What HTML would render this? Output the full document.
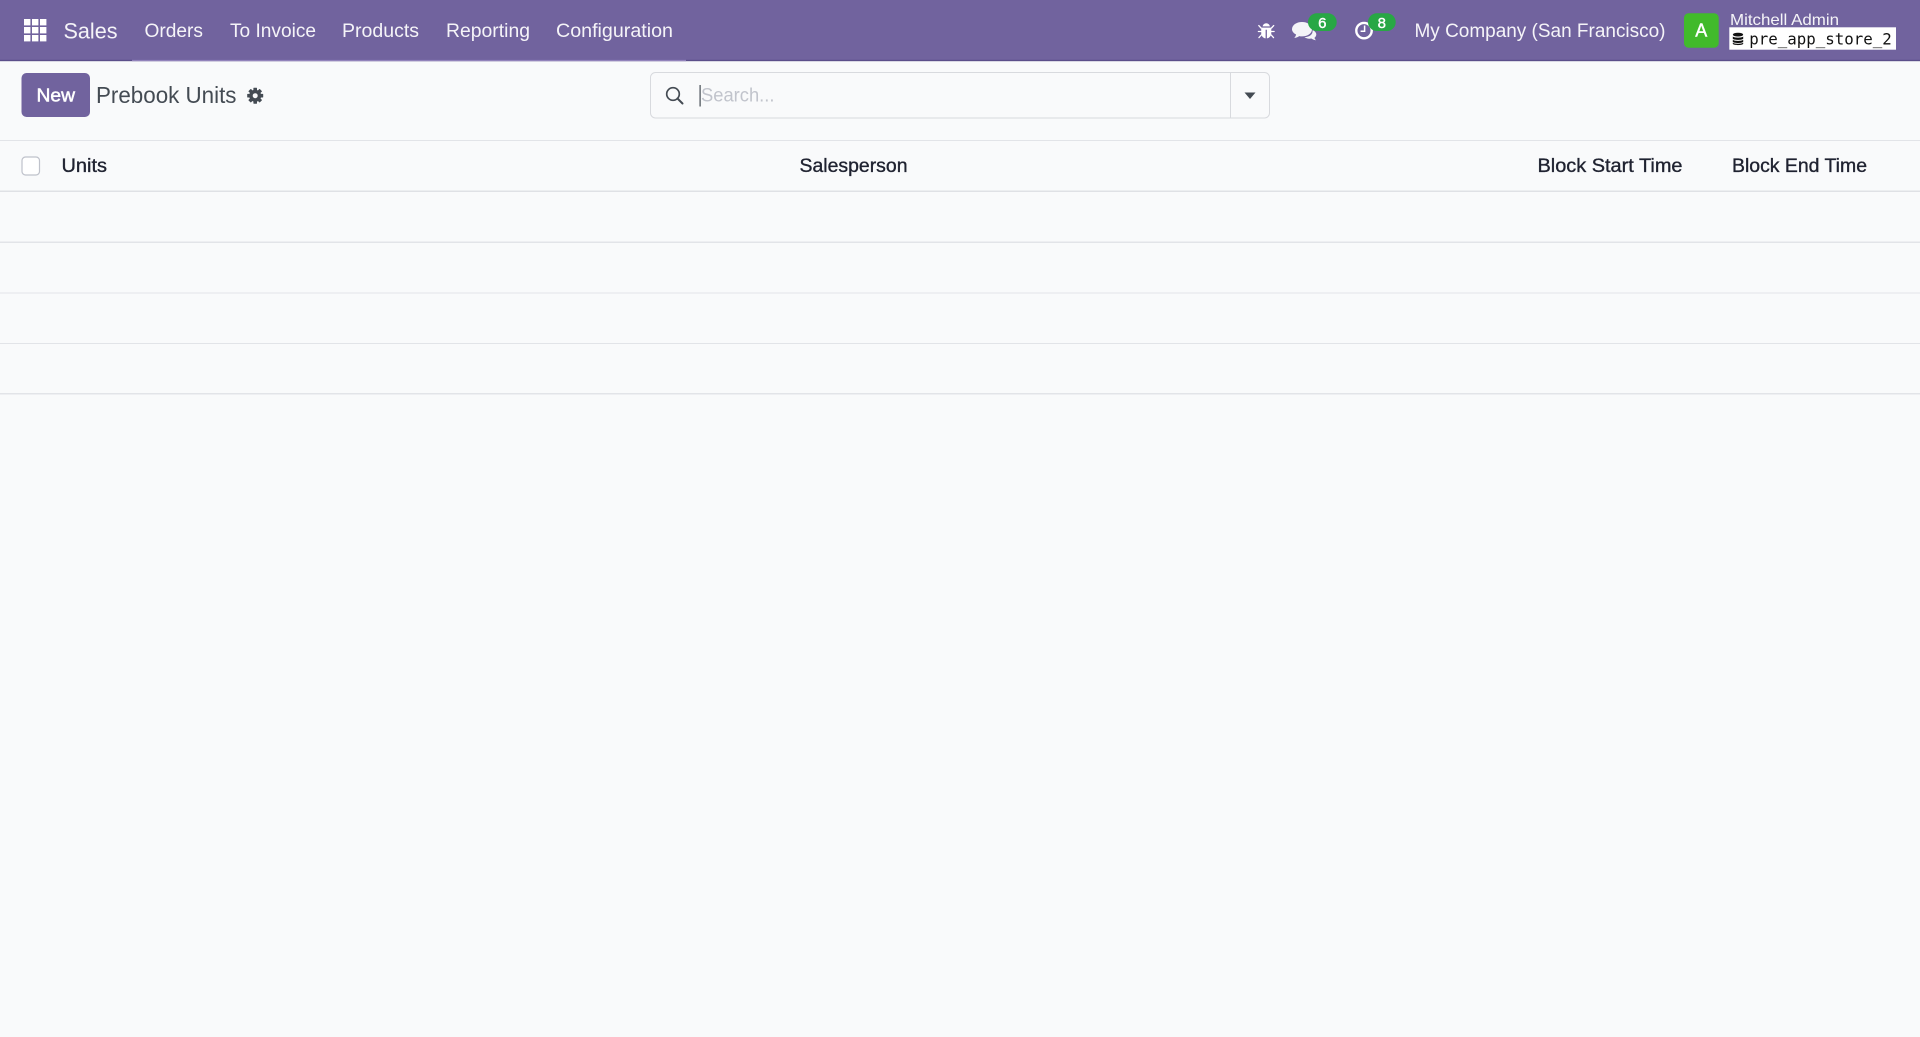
<!DOCTYPE html>
<html lang="en">
<head>
<meta charset="utf-8">
<title>Prebook Units</title>
<style>
html,body{margin:0;padding:0;width:1920px;height:1037px;overflow:hidden;background:#f9fafb}
svg{display:block;font-family:"Liberation Sans",sans-serif}
.nav{fill:#fff;fill-opacity:.93;font-size:19px}
.th{fill:#1f2230;font-size:19px;stroke:#1f2230;stroke-width:.35}
.line{fill:#e2e4e8}
</style>
</head>
<body>
<svg width="1920" height="1037" viewBox="0 0 1920 1037" xmlns="http://www.w3.org/2000/svg">
<rect width="1920" height="1037" fill="#f9fafb"/>
<!-- navbar -->
<rect width="1920" height="61" fill="#71639e"/>
<rect y="59.800" width="1920" height="1.400" fill="#5b4f8a"/>
<rect x="132" y="59.800" width="554" height="1.400" fill="#9283bb"/>
<!-- apps grid -->
<g fill="#fff">
<rect x="24" y="19" width="6.400" height="6.400"/><rect x="32" y="19" width="6.400" height="6.400"/><rect x="40" y="19" width="6.400" height="6.400"/>
<rect x="24" y="27" width="6.400" height="6.400"/><rect x="32" y="27" width="6.400" height="6.400"/><rect x="40" y="27" width="6.400" height="6.400"/>
<rect x="24" y="35" width="6.400" height="6.400"/><rect x="32" y="35" width="6.400" height="6.400"/><rect x="40" y="35" width="6.400" height="6.400"/>
</g>
<text x="63.500" y="38.500" class="nav" style="font-size:22.500px" textLength="54" lengthAdjust="spacingAndGlyphs">Sales</text>
<text x="144.500" y="37" class="nav" textLength="58.500" lengthAdjust="spacingAndGlyphs">Orders</text>
<text x="230" y="37" class="nav" textLength="86" lengthAdjust="spacingAndGlyphs">To Invoice</text>
<text x="342" y="37" class="nav" textLength="77" lengthAdjust="spacingAndGlyphs">Products</text>
<text x="446" y="37" class="nav" textLength="84" lengthAdjust="spacingAndGlyphs">Reporting</text>
<text x="556" y="37" class="nav" textLength="117" lengthAdjust="spacingAndGlyphs">Configuration</text>

<!-- bug -->
<g fill="#fff" stroke="none">
<path d="M1262.600 26.400a3.700 3.700 0 0 1 7.300 0z"/>
<path d="M1261.200 27.600h10.100v5.400c0 3-2 5.200-4.400 5.400v-8.600h-1.300v8.600c-2.400-.2-4.400-2.400-4.400-5.400z"/>
</g>
<g stroke="#fff" stroke-width="1.300" fill="none" stroke-linecap="round">
<path d="M1261 28l-2.200-2.400M1271.500 28l2.200-2.400M1261 31.500h-2.600M1271.500 31.500h2.600M1261.300 35l-2.300 2.600M1271.200 35l2.300 2.600"/>
</g>
<!-- chat bubbles -->
<path d="M1302 22c5.600 0 10 3.100 10 7.200s-4.400 7.200-10 7.200c-1 0-1.900-.1-2.800-.3-1.400 1-3.200 1.700-5 1.900 1-1 1.600-2.200 1.900-3.500-2.500-1.300-4.100-3.300-4.100-5.300 0-4.100 4.400-7.200 10-7.200z" fill="#f4f4f8"/>
<path d="M1313.500 30.500c1.800 1 2.800 2.500 2.800 4 0 1.300-.7 2.400-1.800 3.300.2 1 .7 1.800 1.500 2.400-1.800-.1-3.400-.7-4.600-1.700-2.600.6-5.400-.1-7-1.400 4.300.1 8.800-2.400 8.100-6.600z" fill="#f4f4f8"/>
<!-- badge 6 -->
<rect x="1308" y="13.300" width="28.700" height="17.700" rx="8.800" fill="#28a745"/>
<text x="1322.300" y="28" fill="#fff" font-size="15" stroke="#fff" stroke-width=".4" text-anchor="middle">6</text>
<!-- clock -->
<circle cx="1364" cy="30.600" r="7.700" fill="none" stroke="#fff" stroke-width="2.400"/>
<path d="M1364.600 25.500v5.800h-4" fill="none" stroke="#fff" stroke-width="1.500"/>
<!-- badge 8 -->
<rect x="1368" y="13.300" width="27.700" height="17.700" rx="8.800" fill="#28a745"/>
<text x="1381.800" y="28" fill="#fff" font-size="15" stroke="#fff" stroke-width=".4" text-anchor="middle">8</text>

<text x="1414.500" y="37" class="nav" textLength="251" lengthAdjust="spacingAndGlyphs">My Company (San Francisco)</text>
<!-- avatar -->
<rect x="1684" y="13.300" width="34.700" height="34.400" rx="4.500" fill="#41ba2b"/>
<text x="1701.300" y="36.500" fill="#fff" font-size="18" stroke="#fff" stroke-width=".4" text-anchor="middle">A</text>
<text x="1730" y="25" class="nav" style="font-size:16px" textLength="109" lengthAdjust="spacingAndGlyphs">Mitchell Admin</text>
<rect x="1729.300" y="27.300" width="166.700" height="22.400" fill="#fff"/>
<!-- db icon -->
<g fill="#111">
<ellipse cx="1738" cy="34.600" rx="5.200" ry="1.900"/>
<path d="M1732.800 36.500c1 1.500 9.400 1.500 10.400 0v2.200c-1 1.500-9.400 1.500-10.400 0z"/>
<path d="M1732.800 39.700c1 1.500 9.400 1.500 10.400 0v2.200c-1 1.500-9.400 1.500-10.400 0z"/>
<path d="M1732.800 42.600c1 1.500 9.400 1.500 10.400 0v1.300c-1 1.600-9.400 1.600-10.400 0z"/>
</g>
<text x="1749.300" y="44.500" fill="#111" font-size="15.800" style="font-family:'DejaVu Sans Mono','Liberation Mono',monospace" textLength="142.500" lengthAdjust="spacingAndGlyphs">pre_app_store_2</text>

<!-- control panel -->
<rect x="21.500" y="73" width="68.500" height="44" rx="5" fill="#71639e"/>
<text x="36.500" y="101.500" fill="#fff" font-size="18.500" stroke="#fff" stroke-width=".5" textLength="38.500" lengthAdjust="spacingAndGlyphs">New</text>
<text x="96" y="103" fill="#444b53" font-size="23.500" textLength="140.500" lengthAdjust="spacingAndGlyphs">Prebook Units</text>
<!-- gear -->
<g transform="translate(255.200 95.700)">
<g fill="#444b53">
<circle r="6"/>
<rect x="-1.800" y="-8" width="3.600" height="16" rx=".5"/>
<rect x="-1.800" y="-8" width="3.600" height="16" rx=".5" transform="rotate(45)"/>
<rect x="-1.800" y="-8" width="3.600" height="16" rx=".5" transform="rotate(90)"/>
<rect x="-1.800" y="-8" width="3.600" height="16" rx=".5" transform="rotate(135)"/>
</g>
<circle r="2.500" fill="#f9fafb"/>
</g>

<!-- search -->
<rect x="650.500" y="72.500" width="619" height="45.500" rx="5" fill="#f9fafb" stroke="#d8dade"/>
<rect x="1230" y="73" width="1" height="45" fill="#d8dade"/>
<circle cx="673" cy="94" r="6.300" fill="none" stroke="#444b53" stroke-width="1.700"/>
<path d="M677.500 98.500l5 5" stroke="#444b53" stroke-width="2" stroke-linecap="round"/>
<rect x="699.500" y="85" width="1.200" height="21.500" fill="#444b53"/>
<text x="701" y="101.500" fill="#c1c4cc" font-size="19" textLength="73.500" lengthAdjust="spacingAndGlyphs">Search...</text>
<path d="M1244.500 92.500h11l-5.500 6.500z" fill="#444b53"/>

<!-- table -->
<rect y="140" width="1920" height="1" class="line"/>
<rect y="190.500" width="1920" height="1.500" fill="#dfe1e5"/>
<rect y="241.500" width="1920" height="1.500" class="line"/>
<rect y="292.500" width="1920" height="1" class="line"/>
<rect y="343" width="1920" height="1" class="line"/>
<rect y="393" width="1920" height="1.500" class="line"/>
<rect x="22" y="157" width="17.500" height="18" rx="3.500" fill="#fff" stroke="#bfc2cb" stroke-width="1.200"/>
<text x="61.500" y="172" class="th" textLength="45.500" lengthAdjust="spacingAndGlyphs">Units</text>
<text x="799.500" y="172" class="th" textLength="108" lengthAdjust="spacingAndGlyphs">Salesperson</text>
<text x="1537.500" y="172" class="th" textLength="145" lengthAdjust="spacingAndGlyphs">Block Start Time</text>
<text x="1732" y="172" class="th" textLength="135" lengthAdjust="spacingAndGlyphs">Block End Time</text>
</svg>
</body>
</html>
